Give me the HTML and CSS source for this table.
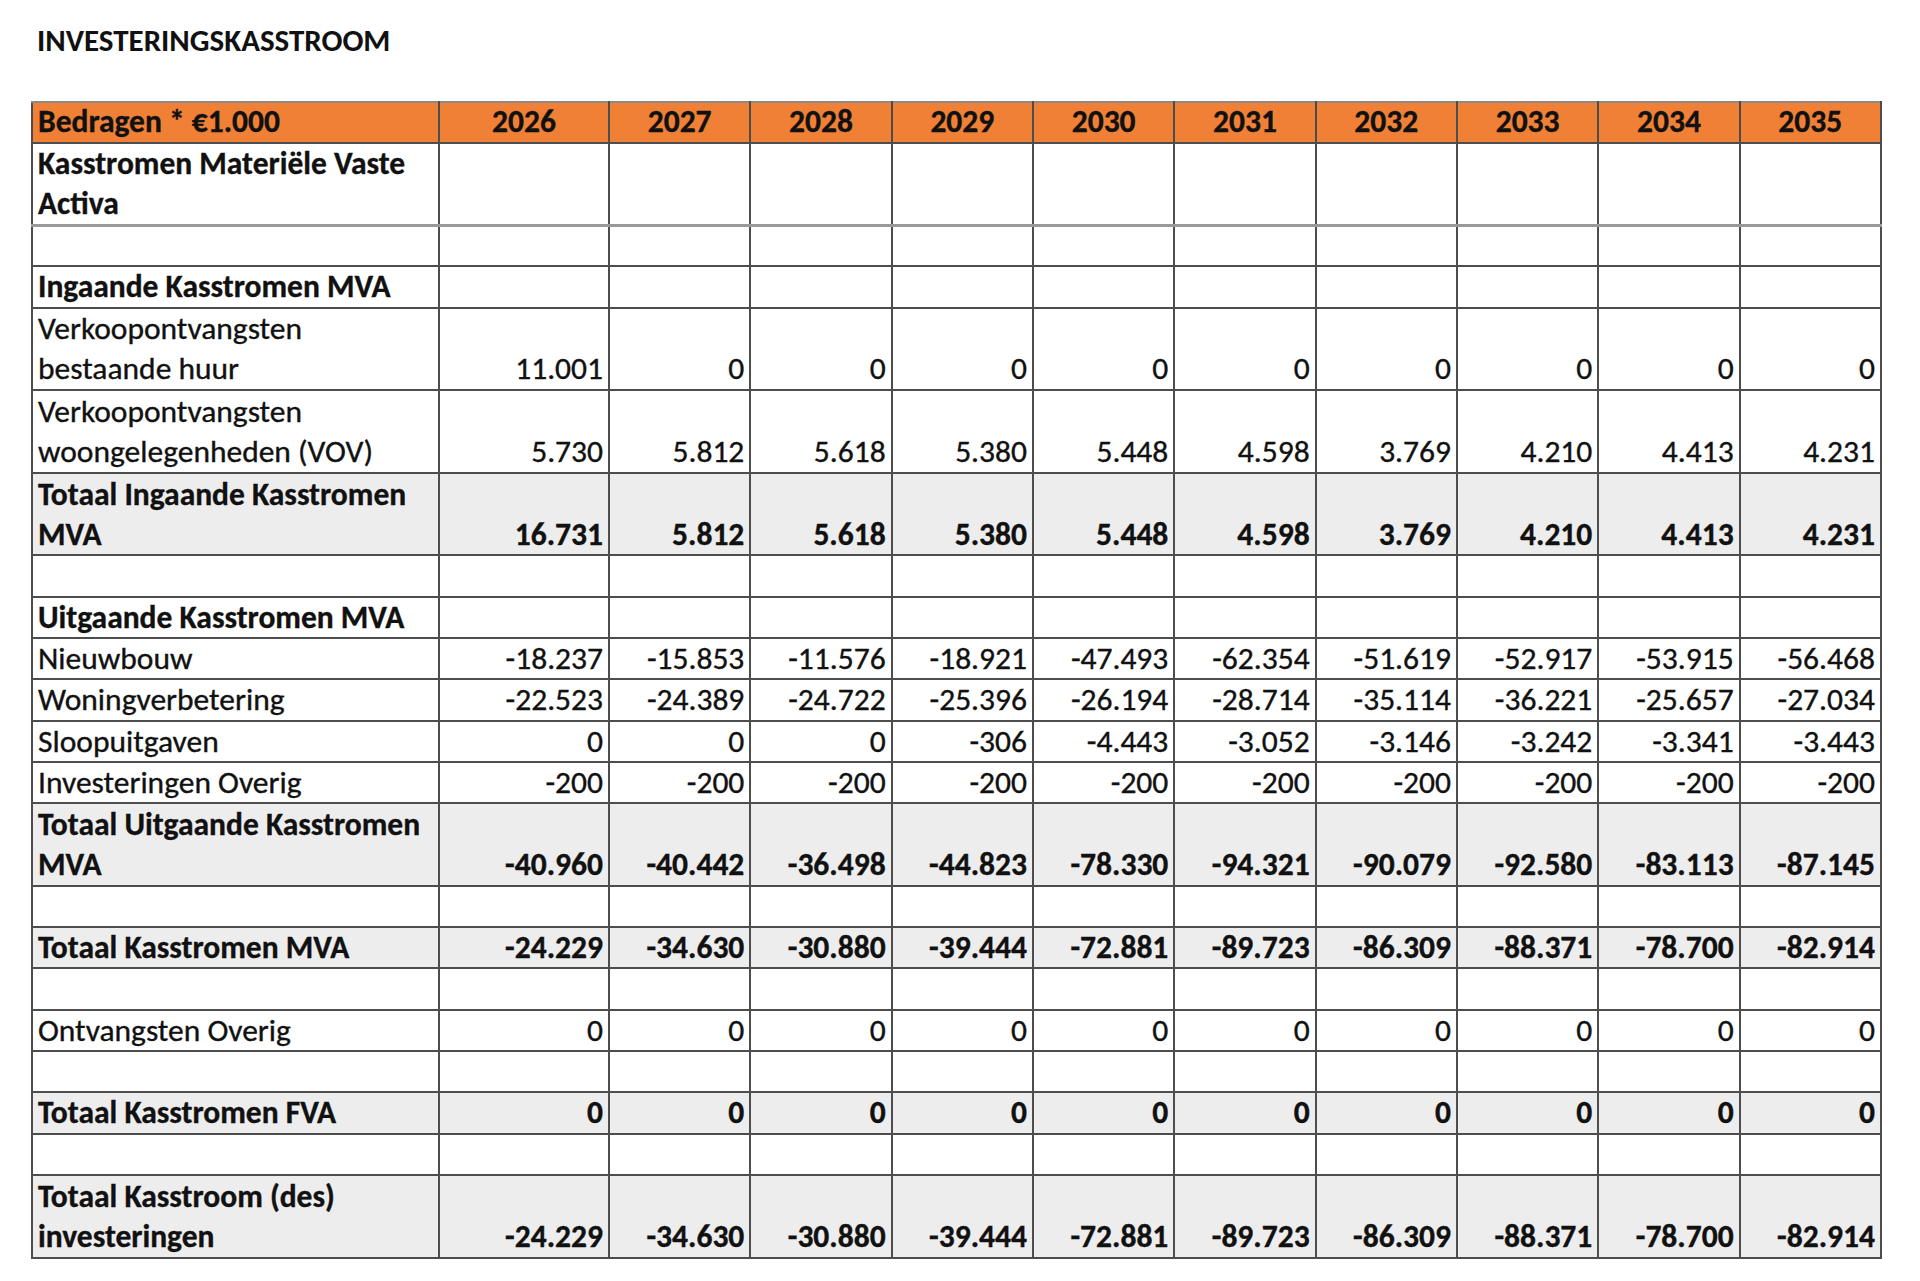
FILE: index.html
```html
<!DOCTYPE html>
<html lang="nl">
<head>
<meta charset="utf-8">
<title>Investeringskasstroom</title>
<link rel="stylesheet" href="styles.css">
</head>
<body>
<div class="page">
  <h1 class="title">INVESTERINGSKASSTROOM</h1>
  <table class="cf">
    <colgroup>
      <col class="c-label">
      <col class="c-first">
      <col class="c-year"><col class="c-year"><col class="c-year"><col class="c-year"><col class="c-year"><col class="c-year"><col class="c-year"><col class="c-year"><col class="c-year">
    </colgroup>
    <thead>
      <tr class="head">
        <th class="lbl">Bedragen * €1.000</th>
        <th>2026</th><th>2027</th><th>2028</th><th>2029</th><th>2030</th><th>2031</th><th>2032</th><th>2033</th><th>2034</th><th>2035</th>
      </tr>
    </thead>
    <tbody>
      <tr class="dbl sec-end">
        <td class="lbl b">Kasstromen Materiële Vaste<br>Activa</td>
        <td></td><td></td><td></td><td></td><td></td><td></td><td></td><td></td><td></td><td></td>
      </tr>
      <tr class="sgl"><td class="lbl"></td><td></td><td></td><td></td><td></td><td></td><td></td><td></td><td></td><td></td><td></td></tr>
      <tr class="sgl">
        <td class="lbl b">Ingaande Kasstromen MVA</td>
        <td></td><td></td><td></td><td></td><td></td><td></td><td></td><td></td><td></td><td></td>
      </tr>
      <tr class="dbl">
        <td class="lbl">Verkoopontvangsten<br>bestaande huur</td>
        <td>11.001</td><td>0</td><td>0</td><td>0</td><td>0</td><td>0</td><td>0</td><td>0</td><td>0</td><td>0</td>
      </tr>
      <tr class="dbl">
        <td class="lbl">Verkoopontvangsten<br>woongelegenheden (VOV)</td>
        <td>5.730</td><td>5.812</td><td>5.618</td><td>5.380</td><td>5.448</td><td>4.598</td><td>3.769</td><td>4.210</td><td>4.413</td><td>4.231</td>
      </tr>
      <tr class="dbl tot">
        <td class="lbl">Totaal Ingaande Kasstromen<br>MVA</td>
        <td>16.731</td><td>5.812</td><td>5.618</td><td>5.380</td><td>5.448</td><td>4.598</td><td>3.769</td><td>4.210</td><td>4.413</td><td>4.231</td>
      </tr>
      <tr class="sgl"><td class="lbl"></td><td></td><td></td><td></td><td></td><td></td><td></td><td></td><td></td><td></td><td></td></tr>
      <tr class="sgl">
        <td class="lbl b">Uitgaande Kasstromen MVA</td>
        <td></td><td></td><td></td><td></td><td></td><td></td><td></td><td></td><td></td><td></td>
      </tr>
      <tr class="sgl">
        <td class="lbl">Nieuwbouw</td>
        <td>-18.237</td><td>-15.853</td><td>-11.576</td><td>-18.921</td><td>-47.493</td><td>-62.354</td><td>-51.619</td><td>-52.917</td><td>-53.915</td><td>-56.468</td>
      </tr>
      <tr class="sgl">
        <td class="lbl">Woningverbetering</td>
        <td>-22.523</td><td>-24.389</td><td>-24.722</td><td>-25.396</td><td>-26.194</td><td>-28.714</td><td>-35.114</td><td>-36.221</td><td>-25.657</td><td>-27.034</td>
      </tr>
      <tr class="sgl">
        <td class="lbl">Sloopuitgaven</td>
        <td>0</td><td>0</td><td>0</td><td>-306</td><td>-4.443</td><td>-3.052</td><td>-3.146</td><td>-3.242</td><td>-3.341</td><td>-3.443</td>
      </tr>
      <tr class="sgl">
        <td class="lbl">Investeringen Overig</td>
        <td>-200</td><td>-200</td><td>-200</td><td>-200</td><td>-200</td><td>-200</td><td>-200</td><td>-200</td><td>-200</td><td>-200</td>
      </tr>
      <tr class="dbl tot">
        <td class="lbl">Totaal Uitgaande Kasstromen<br>MVA</td>
        <td>-40.960</td><td>-40.442</td><td>-36.498</td><td>-44.823</td><td>-78.330</td><td>-94.321</td><td>-90.079</td><td>-92.580</td><td>-83.113</td><td>-87.145</td>
      </tr>
      <tr class="sgl"><td class="lbl"></td><td></td><td></td><td></td><td></td><td></td><td></td><td></td><td></td><td></td><td></td></tr>
      <tr class="sgl tot">
        <td class="lbl">Totaal Kasstromen MVA</td>
        <td>-24.229</td><td>-34.630</td><td>-30.880</td><td>-39.444</td><td>-72.881</td><td>-89.723</td><td>-86.309</td><td>-88.371</td><td>-78.700</td><td>-82.914</td>
      </tr>
      <tr class="sgl"><td class="lbl"></td><td></td><td></td><td></td><td></td><td></td><td></td><td></td><td></td><td></td><td></td></tr>
      <tr class="sgl">
        <td class="lbl">Ontvangsten Overig</td>
        <td>0</td><td>0</td><td>0</td><td>0</td><td>0</td><td>0</td><td>0</td><td>0</td><td>0</td><td>0</td>
      </tr>
      <tr class="sgl"><td class="lbl"></td><td></td><td></td><td></td><td></td><td></td><td></td><td></td><td></td><td></td><td></td></tr>
      <tr class="sgl tot">
        <td class="lbl">Totaal Kasstromen FVA</td>
        <td>0</td><td>0</td><td>0</td><td>0</td><td>0</td><td>0</td><td>0</td><td>0</td><td>0</td><td>0</td>
      </tr>
      <tr class="sgl"><td class="lbl"></td><td></td><td></td><td></td><td></td><td></td><td></td><td></td><td></td><td></td><td></td></tr>
      <tr class="dbl tot">
        <td class="lbl">Totaal Kasstroom (des)<br>investeringen</td>
        <td>-24.229</td><td>-34.630</td><td>-30.880</td><td>-39.444</td><td>-72.881</td><td>-89.723</td><td>-86.309</td><td>-88.371</td><td>-78.700</td><td>-82.914</td>
      </tr>
    </tbody>
  </table>
</div>
</body>
</html>
```
FILE: styles.css
```css
html, body {
  margin: 0;
  padding: 0;
  background: #ffffff;
}

body {
  font-family: Carlito, Lato, "Open Sans", sans-serif;
  color: #111111;
}

.page {
  padding: 21.5px 0 0 31px;
}

.title {
  margin: 0;
  padding-left: 6px;
  font-size: 31px;
  font-weight: 700;
  line-height: 37.8px;
}

.cf {
  margin-top: 41.8px;
  border-collapse: collapse;
  table-layout: fixed;
  width: 1849px;
  font-size: 31.5px;
}

.c-label { width: 407px; }
.c-first { width: 170px; }
.c-year  { width: 141.33px; }

.cf th,
.cf td {
  border: 2px solid #4d4d4d;
  padding: 0 5px 1px 5px;
  line-height: 37.4px;
  vertical-align: bottom;
  text-align: right;
  white-space: nowrap;
  overflow: hidden;
  font-weight: 400;
  -webkit-text-stroke: 0.35px #111111;
}

.cf .lbl {
  text-align: left;
}

.head th {
  background: #ef8036;
  font-weight: 700;
  text-align: center;
  border-top-color: #8a8a8a;
}

.head th.lbl {
  text-align: left;
}

.sgl { height: 41.3px; }
.dbl { height: 82.6px; }

.dbl td {
  padding-bottom: 0;
  line-height: 39.9px;
}

.sec-end td {
  border-bottom: 3px solid #9a9a9a;
}

.cf .b { font-weight: 700; }

.tot td {
  background: #ededed;
  font-weight: 700;
}
```
